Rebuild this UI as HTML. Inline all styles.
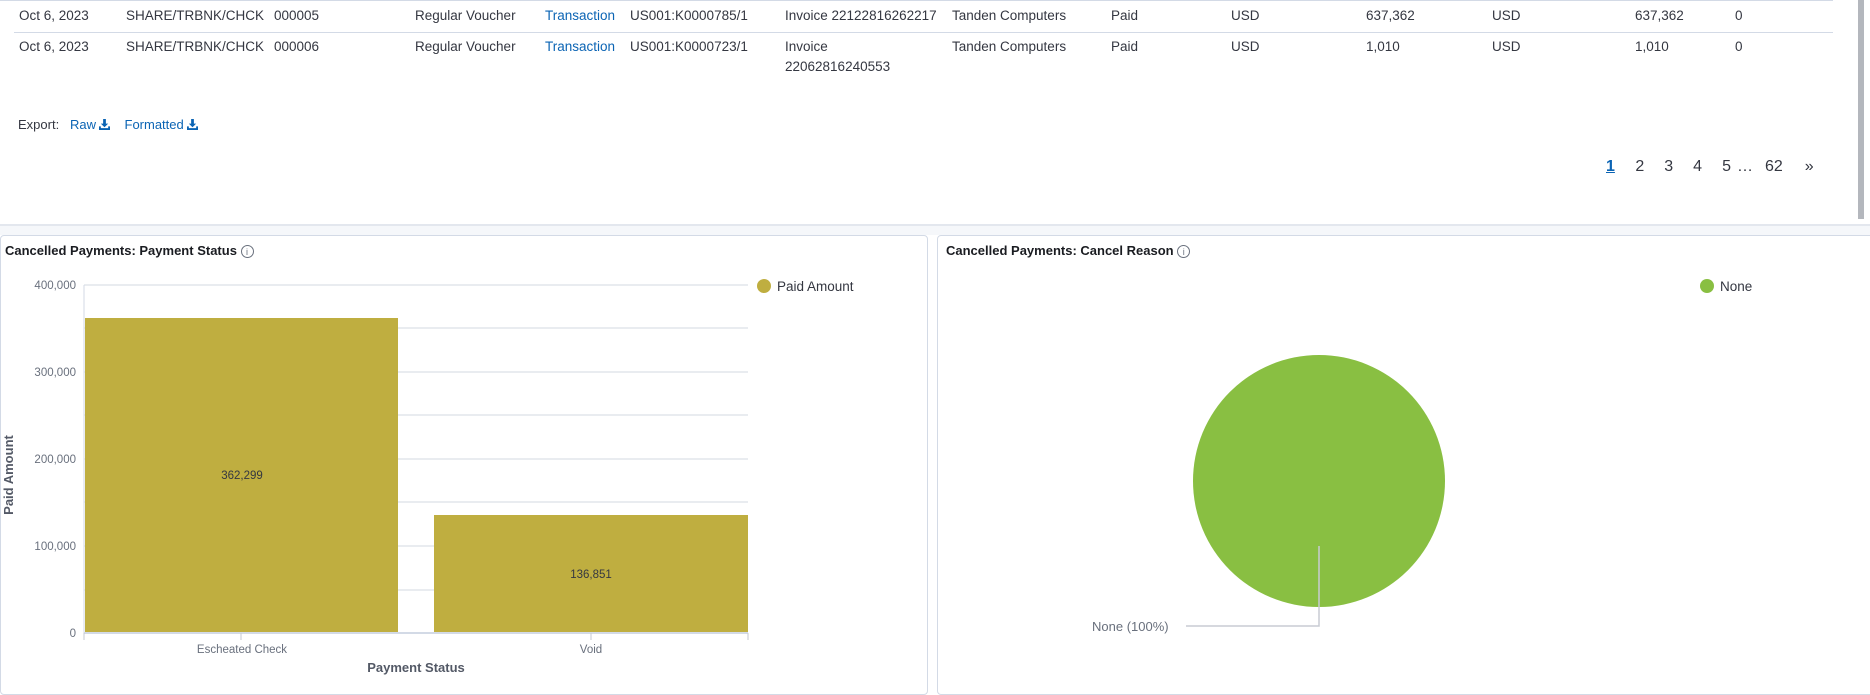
<!DOCTYPE html>
<html><head><meta charset="utf-8"><style>
*{margin:0;padding:0;box-sizing:border-box}
body{width:1870px;height:682px;overflow:hidden;background:#fff;font-family:"Liberation Sans",sans-serif;font-size:13.5px;color:#343741;position:relative}
.a{position:absolute;white-space:nowrap}
.l{color:#0b64b4}
.hl{position:absolute;height:1px;background:#d3dae6}
.dl{display:inline-block;width:11px;height:11px;vertical-align:-1px;margin-left:3px}
</style></head><body>
<div class="hl" style="left:0;top:0;width:1833px"></div>
<div class="hl" style="left:14px;top:32px;width:1819px"></div>
<div class="a" style="left:19px;top:8px">Oct 6, 2023</div>
<div class="a" style="left:126px;top:8px">SHARE/TRBNK/CHCK</div>
<div class="a" style="left:274px;top:8px">000005</div>
<div class="a" style="left:415px;top:8px">Regular Voucher</div>
<div class="a l" style="left:545px;top:8px">Transaction</div>
<div class="a" style="left:630px;top:8px">US001:K0000785/1</div>
<div class="a" style="left:785px;top:8px">Invoice 22122816262217</div>
<div class="a" style="left:952px;top:8px">Tanden Computers</div>
<div class="a" style="left:1111px;top:8px">Paid</div>
<div class="a" style="left:1231px;top:8px">USD</div>
<div class="a" style="left:1366px;top:8px">637,362</div>
<div class="a" style="left:1492px;top:8px">USD</div>
<div class="a" style="left:1635px;top:8px">637,362</div>
<div class="a" style="left:1735px;top:8px">0</div>

<div class="a" style="left:19px;top:39px">Oct 6, 2023</div>
<div class="a" style="left:126px;top:39px">SHARE/TRBNK/CHCK</div>
<div class="a" style="left:274px;top:39px">000006</div>
<div class="a" style="left:415px;top:39px">Regular Voucher</div>
<div class="a l" style="left:545px;top:39px">Transaction</div>
<div class="a" style="left:630px;top:39px">US001:K0000723/1</div>
<div class="a" style="left:785px;top:39px">Invoice</div>
<div class="a" style="left:785px;top:59px">22062816240553</div>
<div class="a" style="left:952px;top:39px">Tanden Computers</div>
<div class="a" style="left:1111px;top:39px">Paid</div>
<div class="a" style="left:1231px;top:39px">USD</div>
<div class="a" style="left:1366px;top:39px">1,010</div>
<div class="a" style="left:1492px;top:39px">USD</div>
<div class="a" style="left:1635px;top:39px">1,010</div>
<div class="a" style="left:1735px;top:39px">0</div>

<div class="a" style="left:18px;top:117px;font-size:13px">Export:&nbsp;&nbsp; <span class="l">Raw<svg class="dl" viewBox="0 0 12 12"><path d="M4.5 0h3v5h2.5L6 9 2 5h2.5z M0 8h2v2h8V8h2v4H0z" fill="#0b64b4"/></svg></span>&nbsp;&nbsp;&nbsp; <span class="l">Formatted<svg class="dl" viewBox="0 0 12 12"><path d="M4.5 0h3v5h2.5L6 9 2 5h2.5z M0 8h2v2h8V8h2v4H0z" fill="#0b64b4"/></svg></span></div>

<div class="a" style="left:1606px;top:158px;font-size:16px;color:#343741">
<span class="l" style="text-decoration:underline;font-weight:bold">1</span>
<span style="margin-left:16px">2</span><span style="margin-left:20px">3</span><span style="margin-left:20px">4</span><span style="margin-left:20px">5</span><span style="margin-left:6px">…</span><span style="margin-left:12px">62</span><span style="margin-left:22px">»</span></div>

<div style="position:absolute;left:1858px;top:0;width:6px;height:219px;background:#b4b7bd"></div>
<div style="position:absolute;left:0;top:224px;width:1870px;height:11px;background:#f5f7fa;border-top:2px solid #e3e7ee"></div>
<div style="position:absolute;left:0;top:235px;width:928px;height:460px;border:1px solid #d3dae6;border-radius:4px"></div>
<div style="position:absolute;left:937px;top:235px;width:940px;height:460px;border:1px solid #d3dae6;border-radius:4px"></div>

<div class="a" style="left:5px;top:243px;font-size:13px;font-weight:bold;color:#1a1c21">Cancelled Payments: Payment Status <span style="font-weight:normal;color:#69707d;border:1px solid #69707d;border-radius:50%;font-size:9px;display:inline-block;width:13px;height:13px;text-align:center;line-height:12px">i</span></div>
<div class="a" style="left:946px;top:243px;font-size:13px;font-weight:bold;color:#1a1c21">Cancelled Payments: Cancel Reason <span style="font-weight:normal;color:#69707d;border:1px solid #69707d;border-radius:50%;font-size:9px;display:inline-block;width:13px;height:13px;text-align:center;line-height:12px">i</span></div>

<svg class="a" style="left:0;top:0" width="1870" height="682" font-family="Liberation Sans, sans-serif">
<g stroke="#e9ecf0" stroke-width="2">
<line x1="84" y1="285" x2="748" y2="285"/><line x1="84" y1="328" x2="748" y2="328"/><line x1="84" y1="372" x2="748" y2="372"/><line x1="84" y1="415" x2="748" y2="415"/><line x1="84" y1="459" x2="748" y2="459"/><line x1="84" y1="502" x2="748" y2="502"/><line x1="84" y1="546" x2="748" y2="546"/><line x1="84" y1="590" x2="748" y2="590"/>
</g>
<line x1="84" y1="285" x2="84" y2="633" stroke="#d3dae6"/>
<rect x="85" y="318" width="313" height="315" fill="#bfae40"/>
<rect x="434" y="515" width="314" height="118" fill="#bfae40"/>
<line x1="84" y1="633" x2="748" y2="633" stroke="#d3dae6" stroke-width="2"/>
<g stroke="#c5cad3"><line x1="84" y1="633" x2="84" y2="640"/><line x1="241" y1="633" x2="241" y2="640"/><line x1="591" y1="633" x2="591" y2="640"/><line x1="748" y1="633" x2="748" y2="640"/></g>
<g font-size="11.5" fill="#69707d" text-anchor="end">
<text x="76" y="289">400,000</text><text x="76" y="376">300,000</text><text x="76" y="463">200,000</text><text x="76" y="550">100,000</text><text x="76" y="637">0</text></g>
<g font-size="11.5" fill="#343741" text-anchor="middle"><text x="242" y="479">362,299</text><text x="591" y="578">136,851</text></g>
<g font-size="11.5" fill="#69707d" text-anchor="middle"><text x="242" y="653">Escheated Check</text><text x="591" y="653">Void</text></g>
<text x="416" y="672" font-size="13" font-weight="bold" fill="#535966" text-anchor="middle">Payment Status</text>
<text transform="translate(13,475) rotate(-90)" font-size="13" font-weight="bold" fill="#535966" text-anchor="middle">Paid Amount</text>
<circle cx="764" cy="286" r="7" fill="#bfae40"/>
<text x="777" y="291" font-size="13.5" fill="#343741">Paid Amount</text>
<circle cx="1319" cy="481" r="126" fill="#89bf42"/>
<polyline points="1319,546 1319,626 1186,626" fill="none" stroke="#c8ccd3" stroke-width="1.5"/>
<text x="1092" y="631" font-size="13" fill="#69707d">None (100%)</text>
<circle cx="1707" cy="286" r="7" fill="#89bf42"/>
<text x="1720" y="291" font-size="13.5" fill="#343741">None</text>
</svg>
</body></html>
